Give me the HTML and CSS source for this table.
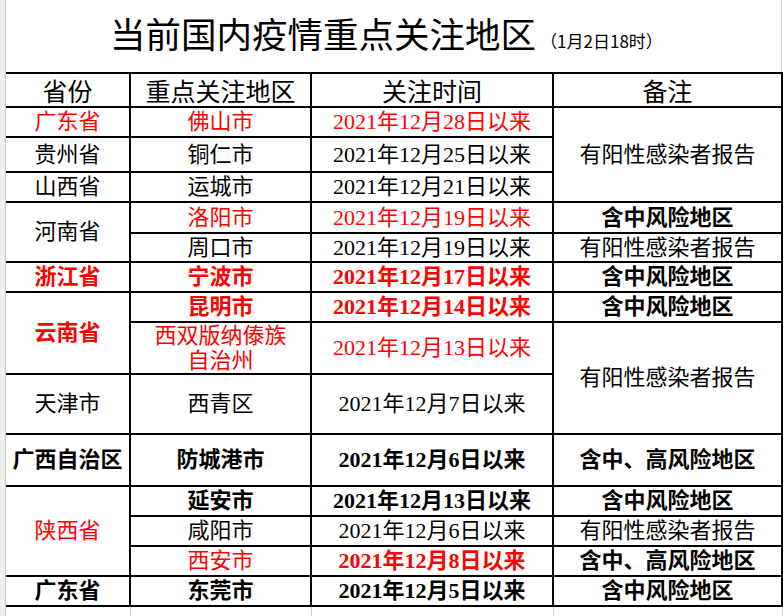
FILE: index.html
```html
<!DOCTYPE html>
<html lang="zh">
<head>
<meta charset="utf-8">
<title>当前国内疫情重点关注地区</title>
<link rel="stylesheet" href="styles.css">
</head>
<body>
<div class="sheet">
  <div class="rowhead"></div>
  <div class="main">
    <div class="title"><span class="title-text">当前国内疫情重点关注地区</span><span class="sub">（1月2日18时）</span></div>
    <table class="grid">
      <colgroup>
        <col class="w1"><col class="w2"><col class="w3"><col class="w4">
      </colgroup>
      <tr class="h34 head">
        <th class="p">省份</th><th>重点关注地区</th><th>关注时间</th><th>备注</th>
      </tr>
      <tr class="h30">
        <td class="p r">广东省</td><td class="r">佛山市</td><td class="r">2021年12月28日以来</td><td rowspan="3">有阳性感染者报告</td>
      </tr>
      <tr class="h35">
        <td class="p">贵州省</td><td>铜仁市</td><td>2021年12月25日以来</td>
      </tr>
      <tr class="h30">
        <td class="p">山西省</td><td>运城市</td><td>2021年12月21日以来</td>
      </tr>
      <tr class="h31">
        <td class="p" rowspan="2">河南省</td><td class="r">洛阳市</td><td class="r">2021年12月19日以来</td><td class="b">含中风险地区</td>
      </tr>
      <tr class="h29">
        <td>周口市</td><td>2021年12月19日以来</td><td>有阳性感染者报告</td>
      </tr>
      <tr class="h30">
        <td class="p r b">浙江省</td><td class="r b">宁波市</td><td class="r b">2021年12月17日以来</td><td class="b">含中风险地区</td>
      </tr>
      <tr class="h30">
        <td class="p r b" rowspan="2">云南省</td><td class="r b">昆明市</td><td class="r b">2021年12月14日以来</td><td class="b">含中风险地区</td>
      </tr>
      <tr class="h52">
        <td class="r wrap">西双版纳傣族<br>自治州</td><td class="r">2021年12月13日以来</td><td rowspan="2">有阳性感染者报告</td>
      </tr>
      <tr class="h60">
        <td class="p">天津市</td><td>西青区</td><td>2021年12月7日以来</td>
      </tr>
      <tr class="h52">
        <td class="p b">广西自治区</td><td class="b">防城港市</td><td class="b">2021年12月6日以来</td><td class="b">含中、高风险地区</td>
      </tr>
      <tr class="h30">
        <td class="p r" rowspan="3">陕西省</td><td class="b">延安市</td><td class="b">2021年12月13日以来</td><td class="b">含中风险地区</td>
      </tr>
      <tr class="h30">
        <td>咸阳市</td><td>2021年12月6日以来</td><td>有阳性感染者报告</td>
      </tr>
      <tr class="h30">
        <td class="r">西安市</td><td class="r b">2021年12月8日以来</td><td class="b">含中、高风险地区</td>
      </tr>
      <tr class="h30">
        <td class="p b">广东省</td><td class="b">东莞市</td><td class="b">2021年12月5日以来</td><td class="b">含中风险地区</td>
      </tr>
      <tr class="empty">
        <td class="p"></td><td></td><td></td><td></td>
      </tr>
    </table>
  </div>
</div>
</body>
</html>
```
FILE: styles.css
```css
html, body {
  margin: 0;
  padding: 0;
  background: #fff;
}
body {
  font-family: "Liberation Serif", "Noto Sans CJK SC", serif;
  color: #000;
}
.sheet {
  display: flex;
  height: 616px;
  overflow: hidden;
}
.rowhead {
  flex: none;
  width: 5px;
  background: #efefef;
  border-right: 1px solid #c6c6c6;
}
.main {
  flex: none;
  width: 776px;
}
.title {
  height: 72px;
  box-sizing: border-box;
  display: flex;
  align-items: baseline;
  justify-content: center;
  padding-top: 13px;
  padding-right: 14px;
  border-right: 1px solid #dadada;
  font-family: "Noto Sans CJK SC", sans-serif;
}
.title-text {
  font-size: 35.5px;
  line-height: 40px;
}
.sub {
  font-size: 17px;
  margin-left: 4px;
}
.grid {
  border-collapse: collapse;
  table-layout: fixed;
  width: 776px;
}
.w1 { width: 124px; }
.w2 { width: 181px; }
.w3 { width: 242px; }
.w4 { width: 229px; }
.grid th,
.grid td {
  border: 2px solid #000;
  padding: 0;
  text-align: center;
  vertical-align: middle;
  font-size: 22px;
  line-height: 26px;
  font-weight: normal;
  white-space: nowrap;
}
.grid td.wrap { line-height: 25px; }
.grid .p { border-left: 0; }
.head th {
  font-size: 25px;
  font-family: "Noto Sans CJK SC", sans-serif;
}
.h29 { height: 29px; }
.h30 { height: 30px; }
.h31 { height: 31px; }
.h34 { height: 34px; }
.h35 { height: 35px; }
.h52 { height: 52px; }
.h60 { height: 60px; }
.r { color: #ff0000; }
.b { font-weight: bold !important; }
.grid .empty td {
  height: 20px;
  border-left: 1px solid #d4d4d4;
  border-right: 1px solid #d4d4d4;
  border-bottom: 0;
}
.grid .empty td.p { border-left: 0; }
```
